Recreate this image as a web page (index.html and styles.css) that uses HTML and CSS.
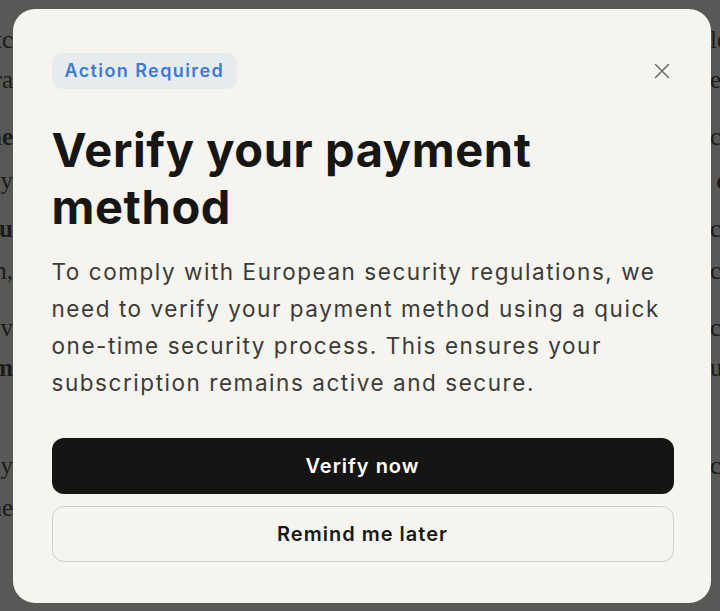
FILE: index.html
```html
<!DOCTYPE html>
<html lang="en">
<head>
<meta charset="utf-8">
<title>Verify your payment method</title>
<link rel="stylesheet" href="styles.css">
</head>
<body>
<div class="page">
  <div class="row r1"><span class="l">Lorem etc</span><span class="r">le</span></div>
  <div class="row r2"><span class="l">contra</span><span class="r">e</span></div>
  <div class="row r3"><span class="l b">the</span><span class="r">co</span></div>
  <div class="row r4"><span class="l">by</span><span class="r b">&nbsp;c</span></div>
  <div class="row r5"><span class="l b">you</span><span class="r">c</span></div>
  <div class="row r6"><span class="l">an,</span><span class="r">c</span></div>
  <div class="row r7"><span class="l">s v</span><span class="r">co</span></div>
  <div class="row r8"><span class="l b">am</span><span class="r">u</span></div>
  <div class="row r9"><span class="l">any</span><span class="r">c</span></div>
  <div class="row r10"><span class="l">the</span><span class="r"></span></div>
</div>

<div class="overlay">
  <div class="modal" role="dialog" aria-labelledby="title">
    <div class="modal-head">
      <span class="badge">Action Required</span>
      <button class="close" aria-label="Close">
        <svg width="16" height="16" viewBox="0 0 16 16" fill="none" stroke="#6f6e6b" stroke-width="1.6" stroke-linecap="round"><path d="M1.5 1.5L14.5 14.5M14.5 1.5L1.5 14.5"/></svg>
      </button>
    </div>
    <h1 id="title" class="title">Verify your payment method</h1>
    <p class="text">To comply with European security regulations, we need to verify your payment method using a quick one-time security process. This ensures your subscription remains active and secure.</p>
    <div class="actions">
      <button class="btn btn-primary">Verify now</button>
      <button class="btn btn-secondary">Remind me later</button>
    </div>
  </div>
</div>
</body>
</html>
```

FILE: styles.css
```css
html, body {
  margin: 0;
  padding: 0;
}
body {
  background: #585856;
  width: 720px;
  height: 611px;
  overflow: hidden;
}
.page {
  font-family: "Liberation Serif", "DejaVu Serif", serif;
  font-size: 25px;
  color: #1b1b1a;
  padding-top: 26px;
}
.row {
  display: flex;
  justify-content: space-between;
  height: 28px;
  line-height: 28px;
  white-space: nowrap;
}
.row .l {
  width: 13px;
  overflow: hidden;
  display: flex;
  justify-content: flex-end;
}
.row .r {
  width: 10px;
  overflow: hidden;
}
.b { font-weight: bold; }
.r2 { margin-top: 12px; }
.r3 { margin-top: 29px; }
.r4 { margin-top: 16px; }
.r5 { margin-top: 20px; }
.r6 { margin-top: 14px; }
.r7 { margin-top: 29px; }
.r8 { margin-top: 12px; }
.r9 { margin-top: 70px; }
.r10 { margin-top: 14px; }

.overlay {
  position: fixed;
  inset: 0;
  display: flex;
  align-items: center;
  justify-content: center;
  padding-left: 3px;
}
.modal {
  box-sizing: border-box;
  width: 698px;
  height: 594px;
  background: #f5f4ef;
  border-radius: 22px;
  padding: 40px 37px 40px 39px;
  font-family: Inter, "Noto Sans", sans-serif;
  display: flex;
  flex-direction: column;
}
.modal-head {
  display: flex;
  align-items: center;
  justify-content: space-between;
  height: 44px;
}
.badge {
  display: inline-flex;
  align-items: center;
  height: 36px;
  padding: 0 13px;
  border-radius: 10px;
  background: #e7ebee;
  color: #3d7ad6;
  font-size: 18px;
  font-weight: 600;
  letter-spacing: 1.4px;
}
.close {
  width: 18px;
  height: 44px;
  margin-right: 3px;
  padding: 0;
  border: 0;
  background: none;
  display: flex;
  align-items: center;
  justify-content: center;
}
.title {
  margin: 28px 0 0;
  font-size: 47px;
  line-height: 57px;
  font-weight: 700;
  color: #161614;
  letter-spacing: 0.6px;
}
.text {
  margin: 18px 4px 0 0;
  font-size: 22.5px;
  line-height: 37px;
  color: #3b3b38;
  letter-spacing: 1.55px;
}
.actions {
  margin-top: 37px;
  display: flex;
  flex-direction: column;
  gap: 12px;
}
.btn {
  height: 56px;
  border-radius: 12px;
  font-family: Inter, "Noto Sans", sans-serif;
  font-size: 20px;
  font-weight: 600;
  letter-spacing: 1px;
  cursor: pointer;
}
.btn-primary {
  background: #151513;
  color: #ffffff;
  border: 0;
}
.btn-secondary {
  background: transparent;
  color: #1a1a18;
  border: 1px solid #cfcdc7;
}
```
